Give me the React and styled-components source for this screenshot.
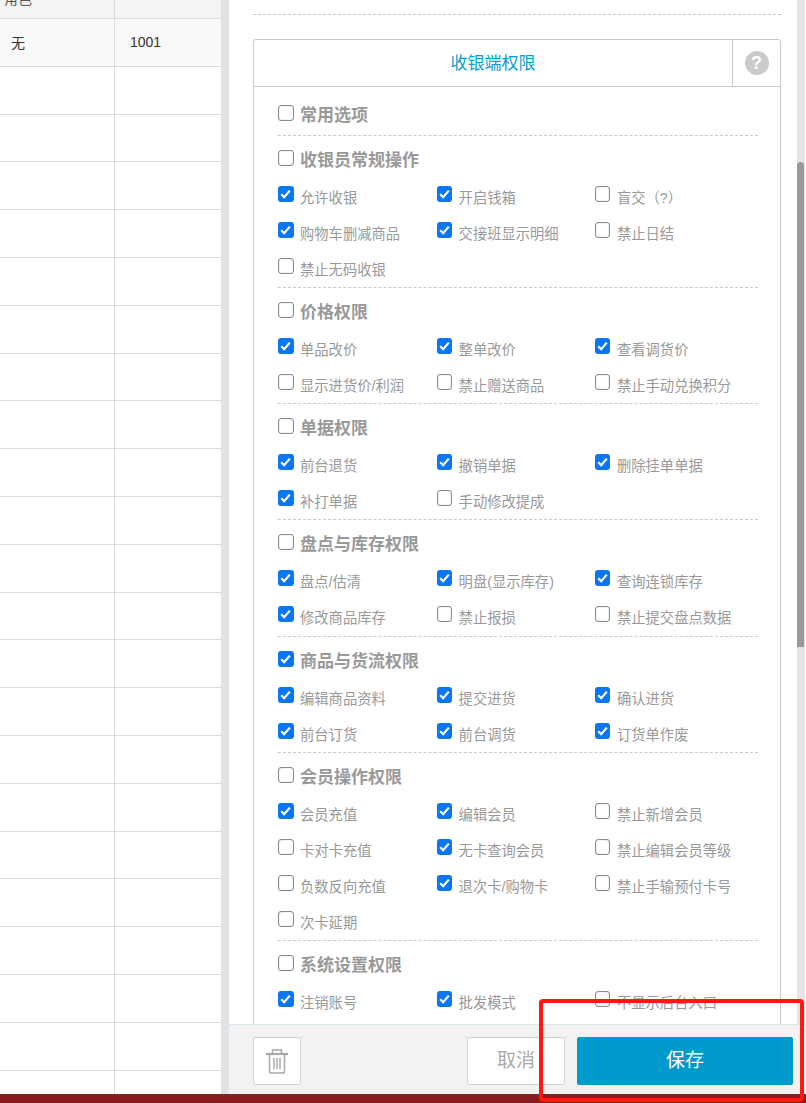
import React from 'react';
import styled, { createGlobalStyle } from 'styled-components';

const GlobalStyle = createGlobalStyle`
  html, body {
    margin: 0;
    padding: 0;
    height: 100%;
    overflow: hidden;
    background: #fff;
    font-family: "Liberation Sans", "Noto Sans CJK SC", sans-serif;
  }
`;

const Page = styled.div`
  position: relative;
  width: 806px;
  height: 1103px;
  display: flex;
  flex-direction: column;
  overflow: hidden;
`;

const Main = styled.div`
  flex: 1;
  display: flex;
  min-height: 0;
`;

const BottomBar = styled.div`
  height: 9px;
  background: #8a1c1f;
  border-top: 1px solid #6f2a2a;
  box-sizing: border-box;
`;

// left table behind the drawer
const TableSide = styled.div`
  width: 229px;
  flex: none;
  display: flex;
  overflow: hidden;
`;

const Table = styled.div`
  width: 221px;
  flex: none;
`;

const TableHead = styled.div`
  height: 19px;
  display: grid;
  grid-template-columns: 115px 1fr;
  background: #f4f4f4;
  border-bottom: 1px solid #dcdcdc;
  box-sizing: border-box;
  overflow: hidden;
`;

const HeadCell = styled.div`
  padding-left: 4px;
  font-size: 14px;
  line-height: 14px;
  margin-top: -8px;
  color: #555;
  border-right: ${({ $last }) => ($last ? 'none' : '1px solid #dcdcdc')};
`;

const Row = styled.div`
  height: 47.8px;
  display: grid;
  grid-template-columns: 115px 1fr;
  background: ${({ $active }) => ($active ? '#f9f9f9' : '#fff')};
  border-bottom: 1px solid #dcdcdc;
  box-sizing: border-box;
`;

const Cell = styled.div`
  display: flex;
  align-items: center;
  padding-left: ${({ $last }) => ($last ? '15px' : '11px')};
  font-size: 14px;
  color: #333;
  border-right: ${({ $last }) => ($last ? 'none' : '1px solid #dcdcdc')};
`;

const TableScroll = styled.div`
  width: 8px;
  flex: none;
  background: #e2e2e2;
  border-right: 1px solid #d8e8ee;
  box-sizing: border-box;
`;

// drawer
const Drawer = styled.div`
  flex: 1;
  min-width: 0;
  display: flex;
  flex-direction: column;
`;

const DrawerBody = styled.div`
  height: 1024px;
  flex: none;
  display: flex;
  overflow: hidden;
`;

const DrawerContent = styled.div`
  flex: 1;
  min-width: 0;
  padding: 14px 0 0 24px;
  overflow: hidden;
`;

const DrawerScroll = styled.div`
  width: 8px;
  flex: none;
  margin-right: 1px;
  background: #e4e4e4;
  border-right: 1px solid #d8e8ee;
  display: flex;
  flex-direction: column;
  padding-top: 162px;
  box-sizing: border-box;
`;

const ScrollThumb = styled.div`
  height: 485px;
  background: #999;
  border-radius: 4px 4px 0 0;
`;

const TopDash = styled.div`
  width: 528px;
  border-top: 1px dashed #c9c9c9;
  margin-bottom: 24px;
`;

const Card = styled.div`
  width: 528px;
  box-sizing: border-box;
`;

const CardHead = styled.div`
  height: 48px;
  display: flex;
  border: 1px solid #c8c8c8;
  border-radius: 3px 3px 0 0;
  box-sizing: border-box;
`;

const CardTitle = styled.div`
  flex: 1;
  display: flex;
  align-items: center;
  justify-content: center;
  padding-bottom: 4px;
  font-size: 17px;
  color: #0a9bd0;
`;

const HelpCell = styled.div`
  width: 47px;
  flex: none;
  display: flex;
  align-items: center;
  justify-content: center;
  border-left: 1px solid #c8c8c8;
`;

const HelpDot = styled.span`
  width: 24px;
  height: 24px;
  border-radius: 50%;
  background: #cbcbcb;
  color: #fff;
  font-size: 18px;
  font-weight: 700;
  line-height: 24px;
  text-align: center;
`;

const CardBody = styled.div`
  border-left: 1px solid #c8c8c8;
  border-right: 1px solid #c8c8c8;
  padding: 0 22px 0 24px;
`;

const Section = styled.div`
  border-bottom: ${({ $last }) => ($last ? 'none' : '1px dashed #c9c9c9')};
  height: ${({ $h }) => $h}px;
  padding-top: ${({ $first }) => ($first ? '4px' : '0')};
  box-sizing: border-box;
`;

const SectionHead = styled.label`
  height: 44px;
  display: flex;
  align-items: center;
  font-size: 17px;
  font-weight: 700;
  color: #999;
`;

const Grid = styled.div`
  display: grid;
  grid-template-columns: 158.6px 158.4px 1fr;
  grid-auto-rows: 36px;
`;

const Item = styled.label`
  display: flex;
  align-items: center;
  font-size: 14.3px;
  color: #999;
  white-space: nowrap;
`;

const Box = styled.span`
  width: 15.5px;
  height: 15.5px;
  flex: none;
  box-sizing: border-box;
  margin-right: 6.5px;
  margin-top: ${({ $head }) => ($head ? '0' : '-8px')};
  border-radius: 3px;
  border: ${({ $on }) => ($on ? 'none' : '1px solid #8c8c8c')};
  box-shadow: ${({ $on }) => ($on ? 'none' : 'inset 0 0 1px #999')};
  background: ${({ $on }) => ($on ? '#0b76f5' : '#fff')};
  display: flex;
  align-items: center;
  justify-content: center;
`;

const ItemText = styled.span`
  margin-bottom: 4px;
`;

// footer
const Footer = styled.div`
  height: 70px;
  flex: none;
  display: flex;
  align-items: flex-start;
  padding: 12px 13px 0 24px;
  background: #f2f2f2;
  border-top: 1px solid #d8e8ee;
  box-sizing: border-box;
`;

const TrashButton = styled.button`
  width: 48px;
  height: 48px;
  padding: 0;
  display: flex;
  align-items: center;
  justify-content: center;
  background: #fff;
  border: 1px solid #d4d4d4;
  border-radius: 2px;
`;

const CancelButton = styled.button`
  width: 98px;
  height: 48px;
  margin-left: auto;
  padding: 0 0 5px;
  background: #fff;
  border: 1px solid #d4d4d4;
  border-radius: 2px;
  font-family: inherit;
  font-size: 19px;
  color: #aaa;
`;

const SaveButton = styled.button`
  width: 216px;
  height: 48px;
  margin-left: 12px;
  padding: 0 0 5px;
  background: #0099cc;
  border: none;
  border-radius: 2px;
  font-family: inherit;
  font-size: 19px;
  color: #fff;
`;

// red box drawn over the screenshot
const Annotation = styled.div`
  position: absolute;
  left: 539px;
  top: 999px;
  width: 265px;
  height: 103px;
  box-sizing: border-box;
  border: 4px solid #ff1a10;
  border-radius: 4px;
  pointer-events: none;
`;

const Check = () => (
  <svg width="11" height="10" viewBox="0 0 11 10">
    <path d="M1.2 5.2 L4.2 8.2 L9.8 1.6" fill="none" stroke="#fff" strokeWidth="2.2" />
  </svg>
);

const Trash = () => (
  <svg width="22" height="25" viewBox="0 0 22 25" fill="none" stroke="#a8a8a8">
    <path d="M0 5h22" strokeWidth="2.2" />
    <path d="M6.500 4V1h9v3" strokeWidth="1.500" />
    <path d="M3.500 6v16.500q0 1.500 1.500 1.500h12q1.500 0 1.500-1.500V6" strokeWidth="1.500" />
    <path d="M8 9v11M11 9v11M14 9v11" strokeWidth="1.400" />
  </svg>
);

const sections = [
  { title: '常用选项', h: 49, first: true, items: [] },
  {
    title: '收银员常规操作',
    h: 152,
    items: [
      ['允许收银', 1], ['开启钱箱', 1], ['盲交（?）', 0],
      ['购物车删减商品', 1], ['交接班显示明细', 1], ['禁止日结', 0],
      ['禁止无码收银', 0],
    ],
  },
  {
    title: '价格权限',
    h: 116,
    items: [
      ['单品改价', 1], ['整单改价', 1], ['查看调货价', 1],
      ['显示进货价/利润', 0], ['禁止赠送商品', 0], ['禁止手动兑换积分', 0],
    ],
  },
  {
    title: '单据权限',
    h: 116,
    items: [
      ['前台退货', 1], ['撤销单据', 1], ['删除挂单单据', 1],
      ['补打单据', 1], ['手动修改提成', 0],
    ],
  },
  {
    title: '盘点与库存权限',
    h: 117,
    items: [
      ['盘点/估清', 1], ['明盘(显示库存)', 1], ['查询连锁库存', 1],
      ['修改商品库存', 1], ['禁止报损', 0], ['禁止提交盘点数据', 0],
    ],
  },
  {
    title: '商品与货流权限',
    on: true,
    h: 116,
    items: [
      ['编辑商品资料', 1], ['提交进货', 1], ['确认进货', 1],
      ['前台订货', 1], ['前台调货', 1], ['订货单作废', 1],
    ],
  },
  {
    title: '会员操作权限',
    h: 188,
    items: [
      ['会员充值', 1], ['编辑会员', 1], ['禁止新增会员', 0],
      ['卡对卡充值', 0], ['无卡查询会员', 1], ['禁止编辑会员等级', 0],
      ['负数反向充值', 0], ['退次卡/购物卡', 1], ['禁止手输预付卡号', 0],
      ['次卡延期', 0],
    ],
  },
  {
    title: '系统设置权限',
    h: 120,
    last: true,
    items: [['注销账号', 1], ['批发模式', 1], ['不显示后台入口', 0]],
  },
];

const rows = Array.from({ length: 23 }, (_, i) => i);

const App = () => (
  <Page>
    <GlobalStyle />
    <Main>
      <TableSide>
        <Table>
          <TableHead>
            <HeadCell>角色</HeadCell>
            <HeadCell $last />
          </TableHead>
          {rows.map((i) => (
            <Row key={i} $active={i === 0}>
              <Cell>{i === 0 ? '无' : ''}</Cell>
              <Cell $last>{i === 0 ? '1001' : ''}</Cell>
            </Row>
          ))}
        </Table>
        <TableScroll />
      </TableSide>

      <Drawer>
        <DrawerBody>
          <DrawerContent>
            <TopDash />
            <Card>
              <CardHead>
                <CardTitle>收银端权限</CardTitle>
                <HelpCell>
                  <HelpDot>?</HelpDot>
                </HelpCell>
              </CardHead>
              <CardBody>
                {sections.map((s) => (
                  <Section key={s.title} $h={s.h} $last={s.last} $first={s.first}>
                    <SectionHead>
                      <Box $head $on={s.on}>{s.on && <Check />}</Box>
                      {s.title}
                    </SectionHead>
                    <Grid>
                      {s.items.map(([label, on]) => (
                        <Item key={label}>
                          <Box $on={!!on}>{!!on && <Check />}</Box>
                          <ItemText>{label}</ItemText>
                        </Item>
                      ))}
                    </Grid>
                  </Section>
                ))}
              </CardBody>
            </Card>
          </DrawerContent>
          <DrawerScroll>
            <ScrollThumb />
          </DrawerScroll>
        </DrawerBody>
        <Footer>
          <TrashButton>
            <Trash />
          </TrashButton>
          <CancelButton>取消</CancelButton>
          <SaveButton>保存</SaveButton>
        </Footer>
      </Drawer>
    </Main>
    <BottomBar />
    <Annotation />
  </Page>
);

export default App;
